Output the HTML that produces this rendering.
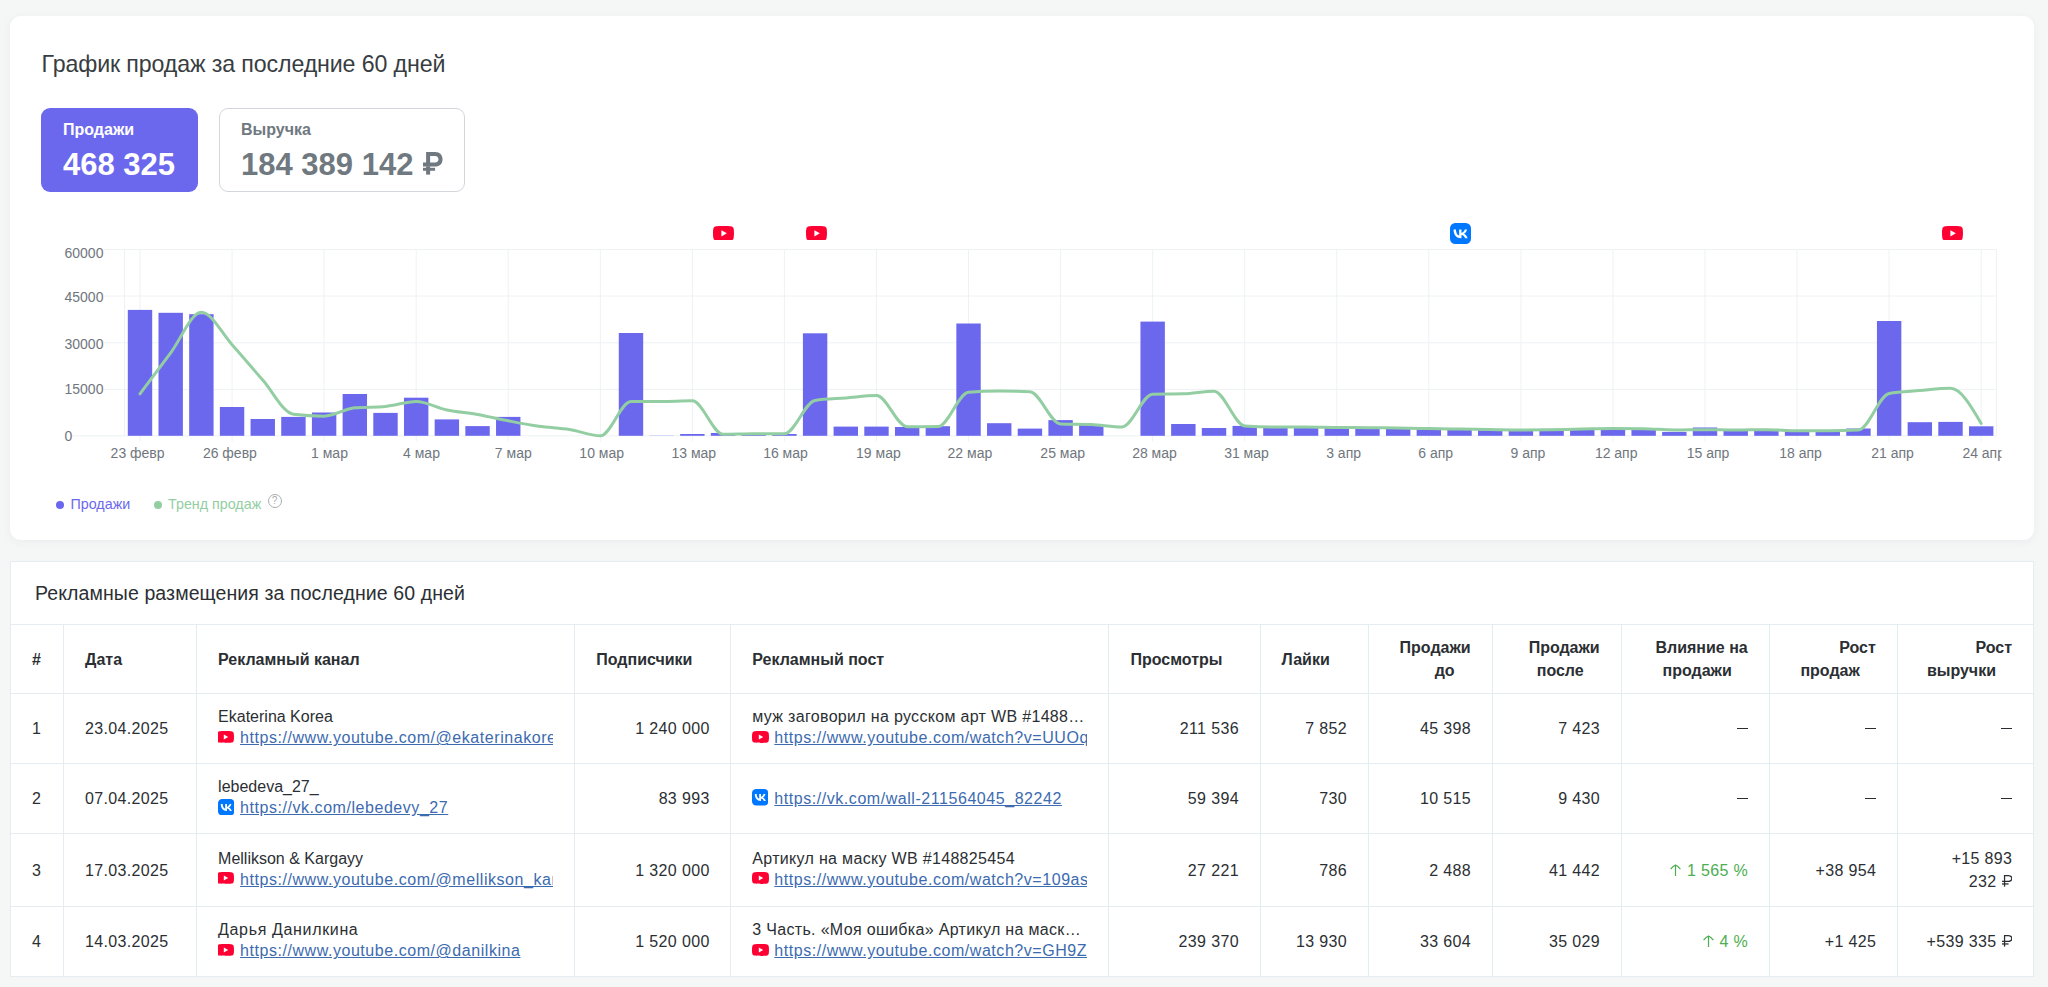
<!DOCTYPE html>
<html lang="ru">
<head>
<meta charset="utf-8">
<title>Продажи</title>
<style>
*{box-sizing:border-box;margin:0;padding:0}
html,body{width:2048px;height:987px;overflow:hidden}
body{background:#f5f7f7;font-family:"Liberation Sans",sans-serif;color:#2b2f33;position:relative}
.card1{position:absolute;left:10px;top:16px;width:2024px;height:524px;background:#fff;border-radius:11px;box-shadow:0 2px 10px rgba(30,40,50,0.05)}
.chart{position:absolute;left:0;top:0}
.t1{position:absolute;left:41.5px;top:50.5px;font-size:23.2px;line-height:26px;color:#383d42;white-space:nowrap;letter-spacing:-0.12px}
.btn{position:absolute;top:108px;height:84px;border-radius:9px}
.b1{left:41px;width:157px;background:#6b68ee;color:#fff}
.b2{left:219px;width:246px;background:#fff;border:1px solid #d3d6da;color:#707880}
.blab{position:absolute;left:22px;top:13px;font-size:16px;font-weight:bold;line-height:18px;white-space:nowrap}
.bval{position:absolute;left:22px;top:39px;font-size:31px;font-weight:bold;line-height:36px;white-space:nowrap}
.b2 .blab{left:21px;top:12px}
.b2 .bval{left:21px;top:38px}
.ax{font-family:"Liberation Sans",sans-serif;font-size:14px;fill:#70767d}
.ico{position:absolute;display:block}
.legend{position:absolute;top:495px;font-size:14.3px;line-height:18px;white-space:nowrap}
.dot{position:absolute;width:8px;height:8px;border-radius:50%}
.q{position:absolute;left:267.5px;top:494px;width:14px;height:14px;border:1px solid #a9adb1;border-radius:50%;font-size:10px;line-height:12px;text-align:center;color:#a9adb1}
.card2{position:absolute;left:10px;top:561px;width:2024px;height:416px;background:#fff;border:1px solid #e4eef1}
.t2{position:absolute;left:24px;top:19px;font-size:19.5px;line-height:24px;color:#2b2f33;white-space:nowrap;letter-spacing:0.1px}
table{position:absolute;left:-1px;top:62px;border-collapse:collapse;table-layout:fixed;width:2024px}
td,th{border:1px solid #e4eef1;font-size:16px;line-height:21px;vertical-align:middle;padding:0 21px;overflow:hidden;white-space:nowrap}
th{font-weight:bold;color:#2b2f33;text-align:left;line-height:23px}
th.r{text-align:right}
td{color:#2b2f33}
td.r{text-align:right;letter-spacing:0.35px;padding-right:20.65px}
td.d{letter-spacing:0.35px}
.lnk{color:#3c6bb0;text-decoration:underline;display:block;overflow:hidden;white-space:nowrap;letter-spacing:0.55px}
.lk{position:relative;padding-left:22px;display:block;overflow:hidden;white-space:nowrap}
.lk svg{position:absolute;left:-0.6px;top:3.6px}
.lk svg.v{left:-0.4px;top:1.2px}
.cc{position:relative;top:-1.2px}
.ell{overflow:hidden;text-overflow:ellipsis;white-space:nowrap;display:block;letter-spacing:0.32px}
.grn{color:#4cae50}
.hs{display:inline-block;width:16px}
.dash{display:inline-block;width:11.5px;height:1.4px;background:#2b2f33;vertical-align:middle;position:relative;top:-1px}
.arr{display:inline-block;vertical-align:baseline;margin-right:6px}
.rb{display:inline-block;vertical-align:baseline;width:0.65em;height:0.73em;margin-left:0.04em}
</style>
</head>
<body>
<div class="card1"></div>
<div class="t1">График продаж за последние 60 дней</div>
<div class="btn b1"><div class="blab">Продажи</div><div class="bval">468 325</div></div>
<div class="btn b2"><div class="blab">Выручка</div><div class="bval">184 389 142 <svg class="rb" viewBox="0 0 65 73"><path fill-rule="evenodd" fill="currentColor" d="M0,34 H10 V0 H39 C55,0 63,10 63,23.5 C63,37 55,47 39,47 H0 Z M23,13 V34 H39 C46,34 50,29.5 50,23.5 C50,17.5 46,13 39,13 Z"/><rect x="10" y="46" width="13" height="27" fill="currentColor"/><rect x="0" y="51" width="39" height="9.5" fill="currentColor"/></svg></div></div>
<svg class="chart" width="2048" height="540" viewBox="0 0 2048 540">
<defs><clipPath id="clipx"><rect x="0" y="0" width="2001.5" height="540"/></clipPath></defs>
<line x1="104" x2="1996.5" y1="249.5" y2="249.5" stroke="#eef2f3" stroke-width="1"/>
<line x1="104" x2="1996.5" y1="296.1" y2="296.1" stroke="#eef2f3" stroke-width="1"/>
<line x1="104" x2="1996.5" y1="342.8" y2="342.8" stroke="#eef2f3" stroke-width="1"/>
<line x1="104" x2="1996.5" y1="389.4" y2="389.4" stroke="#eef2f3" stroke-width="1"/>
<line x1="72" x2="1996.5" y1="435.8" y2="435.8" stroke="#eef2f3" stroke-width="1"/>
<line x1="124.5" x2="124.5" y1="249.5" y2="435.8" stroke="#eef2f3" stroke-width="1"/>
<line x1="1996.5" x2="1996.5" y1="249.5" y2="435.8" stroke="#eef2f3" stroke-width="1"/>
<line x1="140.0" x2="140.0" y1="249.5" y2="441.5" stroke="#eef2f3" stroke-width="1"/>
<line x1="232.1" x2="232.1" y1="249.5" y2="441.5" stroke="#eef2f3" stroke-width="1"/>
<line x1="324.1" x2="324.1" y1="249.5" y2="441.5" stroke="#eef2f3" stroke-width="1"/>
<line x1="416.2" x2="416.2" y1="249.5" y2="441.5" stroke="#eef2f3" stroke-width="1"/>
<line x1="508.2" x2="508.2" y1="249.5" y2="441.5" stroke="#eef2f3" stroke-width="1"/>
<line x1="600.3" x2="600.3" y1="249.5" y2="441.5" stroke="#eef2f3" stroke-width="1"/>
<line x1="692.4" x2="692.4" y1="249.5" y2="441.5" stroke="#eef2f3" stroke-width="1"/>
<line x1="784.4" x2="784.4" y1="249.5" y2="441.5" stroke="#eef2f3" stroke-width="1"/>
<line x1="876.5" x2="876.5" y1="249.5" y2="441.5" stroke="#eef2f3" stroke-width="1"/>
<line x1="968.5" x2="968.5" y1="249.5" y2="441.5" stroke="#eef2f3" stroke-width="1"/>
<line x1="1060.6" x2="1060.6" y1="249.5" y2="441.5" stroke="#eef2f3" stroke-width="1"/>
<line x1="1152.7" x2="1152.7" y1="249.5" y2="441.5" stroke="#eef2f3" stroke-width="1"/>
<line x1="1244.7" x2="1244.7" y1="249.5" y2="441.5" stroke="#eef2f3" stroke-width="1"/>
<line x1="1336.8" x2="1336.8" y1="249.5" y2="441.5" stroke="#eef2f3" stroke-width="1"/>
<line x1="1428.8" x2="1428.8" y1="249.5" y2="441.5" stroke="#eef2f3" stroke-width="1"/>
<line x1="1520.9" x2="1520.9" y1="249.5" y2="441.5" stroke="#eef2f3" stroke-width="1"/>
<line x1="1613.0" x2="1613.0" y1="249.5" y2="441.5" stroke="#eef2f3" stroke-width="1"/>
<line x1="1705.0" x2="1705.0" y1="249.5" y2="441.5" stroke="#eef2f3" stroke-width="1"/>
<line x1="1797.1" x2="1797.1" y1="249.5" y2="441.5" stroke="#eef2f3" stroke-width="1"/>
<line x1="1889.1" x2="1889.1" y1="249.5" y2="441.5" stroke="#eef2f3" stroke-width="1"/>
<line x1="1981.2" x2="1981.2" y1="249.5" y2="441.5" stroke="#eef2f3" stroke-width="1"/>
<rect x="127.80" y="309.90" width="24.40" height="125.90" fill="#6b68ee"/>
<rect x="158.49" y="312.80" width="24.40" height="123.00" fill="#6b68ee"/>
<rect x="189.17" y="314.20" width="24.40" height="121.60" fill="#6b68ee"/>
<rect x="219.86" y="407.00" width="24.40" height="28.80" fill="#6b68ee"/>
<rect x="250.55" y="419.00" width="24.40" height="16.80" fill="#6b68ee"/>
<rect x="281.23" y="416.90" width="24.40" height="18.90" fill="#6b68ee"/>
<rect x="311.92" y="412.50" width="24.40" height="23.30" fill="#6b68ee"/>
<rect x="342.61" y="394.00" width="24.40" height="41.80" fill="#6b68ee"/>
<rect x="373.29" y="412.90" width="24.40" height="22.90" fill="#6b68ee"/>
<rect x="403.98" y="397.70" width="24.40" height="38.10" fill="#6b68ee"/>
<rect x="434.67" y="419.40" width="24.40" height="16.40" fill="#6b68ee"/>
<rect x="465.35" y="426.10" width="24.40" height="9.70" fill="#6b68ee"/>
<rect x="496.04" y="416.90" width="24.40" height="18.90" fill="#6b68ee"/>
<rect x="618.79" y="333.00" width="24.40" height="102.80" fill="#6b68ee"/>
<rect x="649.47" y="435.60" width="24.40" height="0.20" fill="#6b68ee"/>
<rect x="680.16" y="434.00" width="24.40" height="1.80" fill="#6b68ee"/>
<rect x="710.85" y="433.00" width="24.40" height="2.80" fill="#6b68ee"/>
<rect x="741.53" y="434.00" width="24.40" height="1.80" fill="#6b68ee"/>
<rect x="772.22" y="434.00" width="24.40" height="1.80" fill="#6b68ee"/>
<rect x="802.91" y="333.30" width="24.40" height="102.50" fill="#6b68ee"/>
<rect x="833.59" y="426.60" width="24.40" height="9.20" fill="#6b68ee"/>
<rect x="864.28" y="426.60" width="24.40" height="9.20" fill="#6b68ee"/>
<rect x="894.97" y="427.00" width="24.40" height="8.80" fill="#6b68ee"/>
<rect x="925.65" y="426.20" width="24.40" height="9.60" fill="#6b68ee"/>
<rect x="956.34" y="323.50" width="24.40" height="112.30" fill="#6b68ee"/>
<rect x="987.03" y="423.20" width="24.40" height="12.60" fill="#6b68ee"/>
<rect x="1017.71" y="428.60" width="24.40" height="7.20" fill="#6b68ee"/>
<rect x="1048.40" y="420.10" width="24.40" height="15.70" fill="#6b68ee"/>
<rect x="1079.09" y="425.00" width="24.40" height="10.80" fill="#6b68ee"/>
<rect x="1140.46" y="321.60" width="24.40" height="114.20" fill="#6b68ee"/>
<rect x="1171.15" y="424.00" width="24.40" height="11.80" fill="#6b68ee"/>
<rect x="1201.83" y="428.00" width="24.40" height="7.80" fill="#6b68ee"/>
<rect x="1232.52" y="425.90" width="24.40" height="9.90" fill="#6b68ee"/>
<rect x="1263.21" y="427.30" width="24.40" height="8.50" fill="#6b68ee"/>
<rect x="1293.89" y="427.50" width="24.40" height="8.30" fill="#6b68ee"/>
<rect x="1324.58" y="427.50" width="24.40" height="8.30" fill="#6b68ee"/>
<rect x="1355.27" y="428.10" width="24.40" height="7.70" fill="#6b68ee"/>
<rect x="1385.95" y="428.60" width="24.40" height="7.20" fill="#6b68ee"/>
<rect x="1416.64" y="429.00" width="24.40" height="6.80" fill="#6b68ee"/>
<rect x="1447.33" y="429.60" width="24.40" height="6.20" fill="#6b68ee"/>
<rect x="1478.01" y="430.10" width="24.40" height="5.70" fill="#6b68ee"/>
<rect x="1508.70" y="430.10" width="24.40" height="5.70" fill="#6b68ee"/>
<rect x="1539.39" y="428.90" width="24.40" height="6.90" fill="#6b68ee"/>
<rect x="1570.07" y="428.10" width="24.40" height="7.70" fill="#6b68ee"/>
<rect x="1600.76" y="428.50" width="24.40" height="7.30" fill="#6b68ee"/>
<rect x="1631.45" y="429.50" width="24.40" height="6.30" fill="#6b68ee"/>
<rect x="1662.13" y="431.90" width="24.40" height="3.90" fill="#6b68ee"/>
<rect x="1692.82" y="427.50" width="24.40" height="8.30" fill="#6b68ee"/>
<rect x="1723.51" y="430.70" width="24.40" height="5.10" fill="#6b68ee"/>
<rect x="1754.19" y="430.70" width="24.40" height="5.10" fill="#6b68ee"/>
<rect x="1784.88" y="430.70" width="24.40" height="5.10" fill="#6b68ee"/>
<rect x="1815.57" y="430.70" width="24.40" height="5.10" fill="#6b68ee"/>
<rect x="1846.25" y="428.50" width="24.40" height="7.30" fill="#6b68ee"/>
<rect x="1876.94" y="321.00" width="24.40" height="114.80" fill="#6b68ee"/>
<rect x="1907.63" y="422.20" width="24.40" height="13.60" fill="#6b68ee"/>
<rect x="1938.31" y="421.90" width="24.40" height="13.90" fill="#6b68ee"/>
<rect x="1969.00" y="426.30" width="24.40" height="9.50" fill="#6b68ee"/>
<path d="M140.00,393.83 C150.23,380.13 160.46,366.42 170.69,352.83 C180.92,339.24 191.14,312.30 201.37,312.30 C211.60,312.30 221.83,333.37 232.06,344.67 C242.29,355.96 252.52,368.46 262.75,380.07 C272.98,391.67 283.20,413.08 293.43,414.30 C303.66,415.52 313.89,416.13 324.12,416.13 C334.35,416.13 344.58,408.69 354.81,407.80 C365.04,406.91 375.26,407.36 385.49,406.47 C395.72,405.58 405.95,401.53 416.18,401.53 C426.41,401.53 436.64,407.86 446.87,410.00 C457.10,412.14 467.32,412.60 477.55,414.40 C487.78,416.20 498.01,418.82 508.24,420.80 C518.47,422.78 528.70,424.82 538.93,426.27 C549.16,427.72 559.38,427.91 569.61,429.50 C579.84,431.09 590.07,435.80 600.30,435.80 C610.53,435.80 620.76,401.58 630.99,401.53 C641.22,401.49 651.44,401.51 661.67,401.47 C671.90,401.42 682.13,400.87 692.36,400.87 C702.59,400.87 712.82,434.20 723.05,434.20 C733.28,434.20 743.50,433.67 753.73,433.67 C763.96,433.67 774.19,433.67 784.42,433.67 C794.65,433.67 804.88,402.08 815.11,400.43 C825.34,398.79 835.56,398.79 845.79,397.97 C856.02,397.14 866.25,395.50 876.48,395.50 C886.71,395.50 896.94,426.73 907.17,426.73 C917.40,426.73 927.62,426.69 937.85,426.60 C948.08,426.51 958.31,393.08 968.54,392.23 C978.77,391.39 989.00,390.97 999.23,390.97 C1009.46,390.97 1019.68,391.23 1029.91,391.77 C1040.14,392.30 1050.37,423.57 1060.60,423.97 C1070.83,424.37 1081.06,424.17 1091.29,424.57 C1101.52,424.97 1111.74,426.97 1121.97,426.97 C1132.20,426.97 1142.43,394.36 1152.66,394.13 C1162.89,393.91 1173.12,394.02 1183.35,393.80 C1193.58,393.58 1203.80,391.20 1214.03,391.20 C1224.26,391.20 1234.49,425.23 1244.72,425.97 C1254.95,426.70 1265.18,427.07 1275.41,427.07 C1285.64,427.07 1295.86,426.90 1306.09,426.90 C1316.32,426.90 1326.55,427.30 1336.78,427.43 C1347.01,427.57 1357.24,427.59 1367.47,427.70 C1377.70,427.81 1387.92,427.92 1398.15,428.07 C1408.38,428.21 1418.61,428.40 1428.84,428.57 C1439.07,428.73 1449.30,428.90 1459.53,429.07 C1469.76,429.23 1479.98,429.42 1490.21,429.57 C1500.44,429.71 1510.67,429.93 1520.90,429.93 C1531.13,429.93 1541.36,429.85 1551.59,429.70 C1561.82,429.55 1572.04,429.23 1582.27,429.03 C1592.50,428.83 1602.73,428.50 1612.96,428.50 C1623.19,428.50 1633.42,428.57 1643.65,428.70 C1653.88,428.83 1664.10,429.97 1674.33,429.97 C1684.56,429.97 1694.79,429.63 1705.02,429.63 C1715.25,429.63 1725.48,430.03 1735.71,430.03 C1745.94,430.03 1756.16,429.63 1766.39,429.63 C1776.62,429.63 1786.85,430.70 1797.08,430.70 C1807.31,430.70 1817.54,430.70 1827.77,430.70 C1838.00,430.70 1848.22,430.46 1858.45,429.97 C1868.68,429.48 1878.91,395.29 1889.14,393.40 C1899.37,391.51 1909.60,391.41 1919.83,390.57 C1930.06,389.73 1940.28,388.37 1950.51,388.37 C1960.74,388.37 1970.97,405.92 1981.20,423.47" fill="none" stroke="#93cea3" stroke-width="3" stroke-linecap="round" stroke-linejoin="round"/>
<text x="64.5" y="258.0" class="ax">60000</text>
<text x="64.5" y="302.0" class="ax">45000</text>
<text x="64.5" y="348.5" class="ax">30000</text>
<text x="64.5" y="394.4" class="ax">15000</text>
<text x="64.5" y="441.0" class="ax">0</text>
<g clip-path="url(#clipx)">
<text x="137.6" y="457.8" text-anchor="middle" class="ax">23 февр</text>
<text x="229.9" y="457.8" text-anchor="middle" class="ax">26 февр</text>
<text x="329.5" y="457.8" text-anchor="middle" class="ax">1 мар</text>
<text x="421.5" y="457.8" text-anchor="middle" class="ax">4 мар</text>
<text x="513.3" y="457.8" text-anchor="middle" class="ax">7 мар</text>
<text x="601.7" y="457.8" text-anchor="middle" class="ax">10 мар</text>
<text x="693.8" y="457.8" text-anchor="middle" class="ax">13 мар</text>
<text x="785.5" y="457.8" text-anchor="middle" class="ax">16 мар</text>
<text x="878.4" y="457.8" text-anchor="middle" class="ax">19 мар</text>
<text x="969.9" y="457.8" text-anchor="middle" class="ax">22 мар</text>
<text x="1062.7" y="457.8" text-anchor="middle" class="ax">25 мар</text>
<text x="1154.5" y="457.8" text-anchor="middle" class="ax">28 мар</text>
<text x="1246.5" y="457.8" text-anchor="middle" class="ax">31 мар</text>
<text x="1343.6" y="457.8" text-anchor="middle" class="ax">3 апр</text>
<text x="1435.7" y="457.8" text-anchor="middle" class="ax">6 апр</text>
<text x="1528.0" y="457.8" text-anchor="middle" class="ax">9 апр</text>
<text x="1616.2" y="457.8" text-anchor="middle" class="ax">12 апр</text>
<text x="1708.1" y="457.8" text-anchor="middle" class="ax">15 апр</text>
<text x="1800.5" y="457.8" text-anchor="middle" class="ax">18 апр</text>
<text x="1892.5" y="457.8" text-anchor="middle" class="ax">21 апр</text>
<text x="1983.7" y="457.8" text-anchor="middle" class="ax">24 апр</text>
</g>
</svg>
<svg class="ico" style="left:713.2px;top:225.5px" width="21" height="14.7" viewBox="0 0 28.57 20"><path d="M27.97,3.12C27.64,1.89 26.68,0.93 25.45,0.6C23.22,0 14.29,0 14.29,0C14.29,0 5.35,0 3.12,0.6C1.89,0.93 0.93,1.89 0.6,3.12C0,5.35 0,10 0,10C0,10 0,14.65 0.6,16.88C0.93,18.11 1.89,19.07 3.12,19.4C5.35,20 14.29,20 14.29,20C14.29,20 23.22,20 25.45,19.4C26.68,19.07 27.64,18.11 27.97,16.88C28.57,14.65 28.57,10 28.57,10C28.57,10 28.57,5.35 27.97,3.12Z" fill="#ff0033"/><path d="M11.43,14.29L18.85,10L11.43,5.72Z" fill="#fff"/></svg><svg class="ico" style="left:806.0px;top:225.5px" width="21" height="14.7" viewBox="0 0 28.57 20"><path d="M27.97,3.12C27.64,1.89 26.68,0.93 25.45,0.6C23.22,0 14.29,0 14.29,0C14.29,0 5.35,0 3.12,0.6C1.89,0.93 0.93,1.89 0.6,3.12C0,5.35 0,10 0,10C0,10 0,14.65 0.6,16.88C0.93,18.11 1.89,19.07 3.12,19.4C5.35,20 14.29,20 14.29,20C14.29,20 23.22,20 25.45,19.4C26.68,19.07 27.64,18.11 27.97,16.88C28.57,14.65 28.57,10 28.57,10C28.57,10 28.57,5.35 27.97,3.12Z" fill="#ff0033"/><path d="M11.43,14.29L18.85,10L11.43,5.72Z" fill="#fff"/></svg><svg class="ico" style="left:1450.0px;top:222.7px" width="21" height="21" viewBox="0 0 24 24"><rect width="24" height="24" rx="6" fill="#0077ff"/><path d="M6.79,7.3H4.05c.13,6.24 3.25,9.99 8.72,9.99h.31v-3.57c2.01,.2 3.53,1.67 4.14,3.57h2.84c-.78,-2.84 -2.83,-4.41 -4.11,-5.01 1.28,-.74 3.08,-2.54 3.51,-4.98h-2.58c-.56,1.98 -2.22,3.78 -3.8,3.95V7.3H10.5v6.92c-1.6,-.4 -3.62,-2.34 -3.71,-6.92Z" fill="#fff"/></svg><svg class="ico" style="left:1941.5px;top:225.5px" width="21" height="14.7" viewBox="0 0 28.57 20"><path d="M27.97,3.12C27.64,1.89 26.68,0.93 25.45,0.6C23.22,0 14.29,0 14.29,0C14.29,0 5.35,0 3.12,0.6C1.89,0.93 0.93,1.89 0.6,3.12C0,5.35 0,10 0,10C0,10 0,14.65 0.6,16.88C0.93,18.11 1.89,19.07 3.12,19.4C5.35,20 14.29,20 14.29,20C14.29,20 23.22,20 25.45,19.4C26.68,19.07 27.64,18.11 27.97,16.88C28.57,14.65 28.57,10 28.57,10C28.57,10 28.57,5.35 27.97,3.12Z" fill="#ff0033"/><path d="M11.43,14.29L18.85,10L11.43,5.72Z" fill="#fff"/></svg>
<div class="dot" style="left:56px;top:501px;background:#6b68ee"></div>
<div class="legend" style="left:70.5px;color:#6b68ee">Продажи</div>
<div class="dot" style="left:153.5px;top:501px;background:#93cea3"></div>
<div class="legend" style="left:168px;color:#93cea3">Тренд продаж</div>
<div class="q">?</div>

<div class="card2">
<div class="t2">Рекламные размещения за последние 60 дней</div>
<table>
<colgroup>
<col style="width:53px"><col style="width:133px"><col style="width:378px"><col style="width:156px"><col style="width:378px"><col style="width:151px"><col style="width:108px"><col style="width:124px"><col style="width:129px"><col style="width:148px"><col style="width:128px"><col style="width:136px">
</colgroup>
<tr style="height:69px">
<th style="padding-left:21px">#</th><th>Дата</th><th>Рекламный канал</th><th>Подписчики</th><th>Рекламный пост</th><th>Просмотры</th><th>Лайки</th>
<th class="r">Продажи<br>до<span class="hs"></span></th><th class="r">Продажи<br>после<span class="hs"></span></th><th class="r">Влияние на<br>продажи<span class="hs"></span></th><th class="r">Рост<br>продаж<span class="hs"></span></th><th class="r">Рост<br>выручки<span class="hs"></span></th>
</tr>
<tr style="height:70px">
<td>1</td><td class="d">23.04.2025</td>
<td><div class="cc"><div>Ekaterina Korea</div><div class="lk"><svg width="17" height="12" viewBox="0 0 28.57 20"><path d="M27.97,3.12C27.64,1.89 26.68,0.93 25.45,0.6C23.22,0 14.29,0 14.29,0C14.29,0 5.35,0 3.12,0.6C1.89,0.93 0.93,1.89 0.6,3.12C0,5.35 0,10 0,10C0,10 0,14.65 0.6,16.88C0.93,18.11 1.89,19.07 3.12,19.4C5.35,20 14.29,20 14.29,20C14.29,20 23.22,20 25.45,19.4C26.68,19.07 27.64,18.11 27.97,16.88C28.57,14.65 28.57,10 28.57,10C28.57,10 28.57,5.35 27.97,3.12Z" fill="#ff0033"/><path d="M11.43,14.29L18.85,10L11.43,5.72Z" fill="#fff"/></svg><span class="lnk">https://www.youtube.com/@ekaterinakorea</span></div></div></td>
<td class="r">1 240 000</td>
<td><div class="cc"><div class="ell">муж заговорил на русском арт WB #148825454 маска</div><div class="lk"><svg width="17" height="12" viewBox="0 0 28.57 20"><path d="M27.97,3.12C27.64,1.89 26.68,0.93 25.45,0.6C23.22,0 14.29,0 14.29,0C14.29,0 5.35,0 3.12,0.6C1.89,0.93 0.93,1.89 0.6,3.12C0,5.35 0,10 0,10C0,10 0,14.65 0.6,16.88C0.93,18.11 1.89,19.07 3.12,19.4C5.35,20 14.29,20 14.29,20C14.29,20 23.22,20 25.45,19.4C26.68,19.07 27.64,18.11 27.97,16.88C28.57,14.65 28.57,10 28.57,10C28.57,10 28.57,5.35 27.97,3.12Z" fill="#ff0033"/><path d="M11.43,14.29L18.85,10L11.43,5.72Z" fill="#fff"/></svg><span class="lnk">https://www.youtube.com/watch?v=UUOqxyz</span></div></div></td>
<td class="r">211 536</td><td class="r">7 852</td><td class="r">45 398</td><td class="r">7 423</td><td class="r"><span class="dash"></span></td><td class="r"><span class="dash"></span></td><td class="r"><span class="dash"></span></td>
</tr>
<tr style="height:70px">
<td>2</td><td class="d">07.04.2025</td>
<td><div class="cc"><div>lebedeva_27_</div><div class="lk"><svg class="v" width="16.5" height="16.5" viewBox="0 0 24 24"><rect width="24" height="24" rx="6" fill="#0077ff"/><path d="M6.79,7.3H4.05c.13,6.24 3.25,9.99 8.72,9.99h.31v-3.57c2.01,.2 3.53,1.67 4.14,3.57h2.84c-.78,-2.84 -2.83,-4.41 -4.11,-5.01 1.28,-.74 3.08,-2.54 3.51,-4.98h-2.58c-.56,1.98 -2.22,3.78 -3.8,3.95V7.3H10.5v6.92c-1.6,-.4 -3.62,-2.34 -3.71,-6.92Z" fill="#fff"/></svg><span class="lnk">https://vk.com/lebedevy_27</span></div></div></td>
<td class="r">83 993</td>
<td><div class="lk"><svg class="v" width="16.5" height="16.5" viewBox="0 0 24 24"><rect width="24" height="24" rx="6" fill="#0077ff"/><path d="M6.79,7.3H4.05c.13,6.24 3.25,9.99 8.72,9.99h.31v-3.57c2.01,.2 3.53,1.67 4.14,3.57h2.84c-.78,-2.84 -2.83,-4.41 -4.11,-5.01 1.28,-.74 3.08,-2.54 3.51,-4.98h-2.58c-.56,1.98 -2.22,3.78 -3.8,3.95V7.3H10.5v6.92c-1.6,-.4 -3.62,-2.34 -3.71,-6.92Z" fill="#fff"/></svg><span class="lnk">https://vk.com/wall-211564045_82242</span></div></td>
<td class="r">59 394</td><td class="r">730</td><td class="r">10 515</td><td class="r">9 430</td><td class="r"><span class="dash"></span></td><td class="r"><span class="dash"></span></td><td class="r"><span class="dash"></span></td>
</tr>
<tr style="height:73px">
<td>3</td><td class="d">17.03.2025</td>
<td><div class="cc"><div>Mellikson &amp; Kargayy</div><div class="lk"><svg width="17" height="12" viewBox="0 0 28.57 20"><path d="M27.97,3.12C27.64,1.89 26.68,0.93 25.45,0.6C23.22,0 14.29,0 14.29,0C14.29,0 5.35,0 3.12,0.6C1.89,0.93 0.93,1.89 0.6,3.12C0,5.35 0,10 0,10C0,10 0,14.65 0.6,16.88C0.93,18.11 1.89,19.07 3.12,19.4C5.35,20 14.29,20 14.29,20C14.29,20 23.22,20 25.45,19.4C26.68,19.07 27.64,18.11 27.97,16.88C28.57,14.65 28.57,10 28.57,10C28.57,10 28.57,5.35 27.97,3.12Z" fill="#ff0033"/><path d="M11.43,14.29L18.85,10L11.43,5.72Z" fill="#fff"/></svg><span class="lnk">https://www.youtube.com/@mellikson_kargayy</span></div></div></td>
<td class="r">1 320 000</td>
<td><div class="cc"><div class="ell">Артикул на маску WB #148825454</div><div class="lk"><svg width="17" height="12" viewBox="0 0 28.57 20"><path d="M27.97,3.12C27.64,1.89 26.68,0.93 25.45,0.6C23.22,0 14.29,0 14.29,0C14.29,0 5.35,0 3.12,0.6C1.89,0.93 0.93,1.89 0.6,3.12C0,5.35 0,10 0,10C0,10 0,14.65 0.6,16.88C0.93,18.11 1.89,19.07 3.12,19.4C5.35,20 14.29,20 14.29,20C14.29,20 23.22,20 25.45,19.4C26.68,19.07 27.64,18.11 27.97,16.88C28.57,14.65 28.57,10 28.57,10C28.57,10 28.57,5.35 27.97,3.12Z" fill="#ff0033"/><path d="M11.43,14.29L18.85,10L11.43,5.72Z" fill="#fff"/></svg><span class="lnk">https://www.youtube.com/watch?v=109asdf</span></div></div></td>
<td class="r">27 221</td><td class="r">786</td><td class="r">2 488</td><td class="r">41 442</td><td class="r grn"><svg class="arr" width="11" height="12" viewBox="0 0 11 12"><path d="M5.5,1 V12 M0.6,5.2 Q3.2,2 5.5,1 Q7.8,2 10.4,5.2" fill="none" stroke="#4cae50" stroke-width="1.2"/></svg>1 565 %</td><td class="r">+38 954</td><td class="r" style="line-height:23px">+15 893<br>232 <svg class="rb" viewBox="0 0 65 73"><path fill-rule="evenodd" fill="currentColor" d="M0,36 H12 V0 H40 C56,0 65,9 65,22 C65,35 56,44 40,44 H0 Z M20,8 V36 H40 C51,36 57,30 57,22 C57,14 51,8 40,8 Z"/><rect x="12" y="43" width="8" height="30" fill="currentColor"/><rect x="0" y="52" width="41" height="8" fill="currentColor"/></svg></td>
</tr>
<tr style="height:70px">
<td>4</td><td class="d">14.03.2025</td>
<td><div class="cc"><div style="letter-spacing:0.65px">Дарья Данилкина</div><div class="lk"><svg width="17" height="12" viewBox="0 0 28.57 20"><path d="M27.97,3.12C27.64,1.89 26.68,0.93 25.45,0.6C23.22,0 14.29,0 14.29,0C14.29,0 5.35,0 3.12,0.6C1.89,0.93 0.93,1.89 0.6,3.12C0,5.35 0,10 0,10C0,10 0,14.65 0.6,16.88C0.93,18.11 1.89,19.07 3.12,19.4C5.35,20 14.29,20 14.29,20C14.29,20 23.22,20 25.45,19.4C26.68,19.07 27.64,18.11 27.97,16.88C28.57,14.65 28.57,10 28.57,10C28.57,10 28.57,5.35 27.97,3.12Z" fill="#ff0033"/><path d="M11.43,14.29L18.85,10L11.43,5.72Z" fill="#fff"/></svg><span class="lnk">https://www.youtube.com/@danilkina</span></div></div></td>
<td class="r">1 520 000</td>
<td><div class="cc"><div class="ell">3 Часть. «Моя ошибка» Артикул на маску WB</div><div class="lk"><svg width="17" height="12" viewBox="0 0 28.57 20"><path d="M27.97,3.12C27.64,1.89 26.68,0.93 25.45,0.6C23.22,0 14.29,0 14.29,0C14.29,0 5.35,0 3.12,0.6C1.89,0.93 0.93,1.89 0.6,3.12C0,5.35 0,10 0,10C0,10 0,14.65 0.6,16.88C0.93,18.11 1.89,19.07 3.12,19.4C5.35,20 14.29,20 14.29,20C14.29,20 23.22,20 25.45,19.4C26.68,19.07 27.64,18.11 27.97,16.88C28.57,14.65 28.57,10 28.57,10C28.57,10 28.57,5.35 27.97,3.12Z" fill="#ff0033"/><path d="M11.43,14.29L18.85,10L11.43,5.72Z" fill="#fff"/></svg><span class="lnk">https://www.youtube.com/watch?v=GH9Zqwe</span></div></div></td>
<td class="r">239 370</td><td class="r">13 930</td><td class="r">33 604</td><td class="r">35 029</td><td class="r grn"><svg class="arr" width="11" height="12" viewBox="0 0 11 12"><path d="M5.5,1 V12 M0.6,5.2 Q3.2,2 5.5,1 Q7.8,2 10.4,5.2" fill="none" stroke="#4cae50" stroke-width="1.2"/></svg>4 %</td><td class="r">+1 425</td><td class="r">+539 335 <svg class="rb" viewBox="0 0 65 73"><path fill-rule="evenodd" fill="currentColor" d="M0,36 H12 V0 H40 C56,0 65,9 65,22 C65,35 56,44 40,44 H0 Z M20,8 V36 H40 C51,36 57,30 57,22 C57,14 51,8 40,8 Z"/><rect x="12" y="43" width="8" height="30" fill="currentColor"/><rect x="0" y="52" width="41" height="8" fill="currentColor"/></svg></td>
</tr>
</table>
</div>
</body>
</html>
